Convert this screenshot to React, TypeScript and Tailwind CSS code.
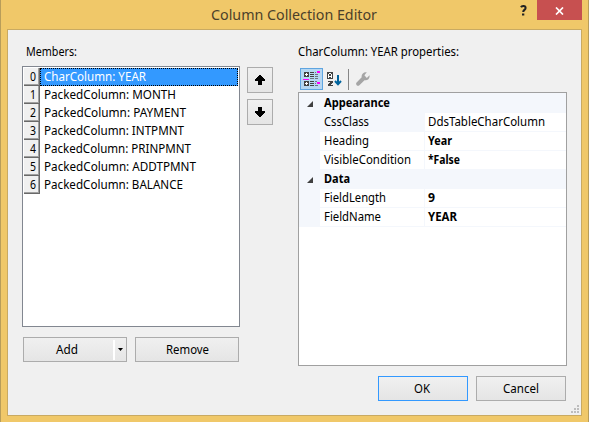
import React from "react";

const members = ["CharColumn: YEAR", "PackedColumn: MONTH", "PackedColumn: PAYMENT", "PackedColumn: INTPMNT", "PackedColumn: PRINPMNT", "PackedColumn: ADDTPMNT", "PackedColumn: BALANCE"];
const memberWidths = [102, 132, 142, 140, 147, 152, 139];

type Prop = { name: string; value: string; nameWidth: number; valueWidth: number; plain?: boolean };
const groups: { title: string; width: number; items: Prop[] }[] = [
  {
    title: "Appearance",
    width: 66,
    items: [
      { name: "CssClass", value: "DdsTableCharColumn", nameWidth: 45, valueWidth: 117, plain: true },
      { name: "Heading", value: "Year", nameWidth: 45, valueWidth: 24 },
      { name: "VisibleCondition", value: "*False", nameWidth: 87, valueWidth: 32 },
    ],
  },
  {
    title: "Data",
    width: 26,
    items: [
      { name: "FieldLength", value: "9", nameWidth: 62, valueWidth: 7 },
      { name: "FieldName", value: "YEAR", nameWidth: 57, valueWidth: 29 },
    ],
  },
];

/** Text fitted to a fixed advance width. */
function Label({ text, width, size = 12, bold = false, fill = "#000" }: { text: string; width: number; size?: number; bold?: boolean; fill?: string }) {
  return (
    <svg width={width} height={size + 6} className="block shrink-0 overflow-visible">
      <text x="0" y={size + 1} fontSize={size} fontWeight={bold ? 700 : 400} fill={fill} textLength={width} lengthAdjust="spacingAndGlyphs">
        {text}
      </text>
    </svg>
  );
}

const face = "border border-[#acacac] bg-linear-to-b from-[#f0f0f0] to-[#e5e5e5]";

function Arrow({ down = false }: { down?: boolean }) {
  return (
    <button className={`flex h-[26px] w-[26px] items-center justify-center ${face}`}>
      <svg width="10" height="10" viewBox="0 0 10 10" className={down ? "rotate-180" : ""} shapeRendering="crispEdges">
        <path d="M4 0h2v1h1v1h1v1h1v1h1v2H7v4H3V6H0V4h1V3h1V2h1V1h1z" />
      </svg>
    </button>
  );
}

function CategoryIcon() {
  return (
    <svg width="17" height="16" viewBox="0 0 17 16" shapeRendering="crispEdges">
      <path fill="#424242" d="M1 1h5v5H1zM1 10h5v5H1zM7 1h4v1H7zM7 3h4v1H7zM7 5h4v1H7zM7 10h4v1H7zM7 12h4v1H7zM7 14h4v1H7z" />
      <path fill="#6b7480" d="M7 7h4v1H7zM12 1h1v1h-1zM12 3h3v1h-3zM12 5h3v1h-3zM12 7h3v1h-3zM12 10h2v1h-2zM12 12h1v1h-1zM12 14h3v1h-3z" />
      <path fill="#fff" d="M3 2h1v1h1v1H4v1H3V4H2V3h1zM3 11h1v1h1v1H4v1H3v-1H2v-1h1z" />
      <path fill="#f0f" d="M0 8h6v1H0zM14 0h3v2h-3zM14 11h3v2h-3z" />
    </svg>
  );
}

function SortIcon() {
  return (
    <svg width="16" height="16" viewBox="0 0 16 16">
      <g shapeRendering="crispEdges">
        <path fill="#424242" d="M1 1h6v7H1z" />
        <path fill="#fff" d="M3 2h2v1H3zM2 3h1v4H2zM5 3h1v4H5zM3 5h2v1H3z" />
        <path fill="#424242" d="M2 10h5v2H6v1H5v1h2v1H2v-2h1v-1h1v-1H2z" />
      </g>
      <path fill="none" stroke="#00639c" strokeWidth="2" d="M12 4v9M9 10l3 3.2L15 10" />
    </svg>
  );
}

function Wrench() {
  return (
    <svg width="14" height="14" viewBox="0 0 14 14">
      <path fill="#a5a5a5" d="M10.8 0.3C8 -.4 5 2 5.7 5.2L.6 10.4c-1.6 1.8 1 4.5 2.8 2.8l5.1-5c3 .8 5.7-1.9 5-4.9L10.8 5.9 8.4 3.2z" />
    </svg>
  );
}

export default function App() {
  return (
    <div className="flex h-[422px] w-[589px] flex-col overflow-hidden border-x border-[#b89d5a] bg-[#f0c869] font-['Noto_Sans','Open_Sans',sans-serif] text-[12px] text-black">
      <header className="flex h-[29px] shrink-0">
        <div className="w-[210px]" />
        <div className="pt-[4px]"><Label text="Column Collection Editor" width={166} size={15} fill="#4b402a" /></div>
        <div className="ml-[143px] w-[17px] pt-[5px]">
          <svg width="7" height="11" viewBox="0 0 7 11"><path d="M1 2.3C1.8.6 5.6.3 5.6 3 5.6 5 3.2 4.8 3.2 7" fill="none" stroke="#222" strokeWidth="2" /><path fill="#222" d="M2 8.5h2.3v2H2z" /></svg>
        </div>
        <button className="flex h-[20px] w-[45px] items-center justify-center bg-[#c75050]">
          <svg width="9" height="8" viewBox="0 0 9 8" className="mt-px"><path d="M1 .5l7 7M8 .5l-7 7" stroke="#fff" strokeWidth="1.7" /></svg>
        </button>
      </header>
      <main className="ml-[6px] flex h-[387px] w-[575px] shrink-0 flex-col border border-[#c9aa62] bg-[#f0f0f0]">
        <div className="flex h-[336px] shrink-0">
          <section className="ml-[14px] w-[218px]">
            <div className="h-[36px] pt-[13px] pl-[4px]"><Label text="Members:" width={51} /></div>
            <div className="h-[261px] border border-[#828790] bg-white p-px">
              {members.map((m, i) => (
                <div key={m} className="flex h-[18px]">
                  <div className="flex w-[16px] border-r border-b border-[#696969] bg-[#f0f0f0] pl-[6px] shadow-[inset_-1px_-1px_#a0a0a0]">
                    <Label text={String(i)} width={6} />
                  </div>
                  <div className={`flex-1 pl-[4px] ${i === 0 ? "bg-[#3399ff] outline-1 -outline-offset-1 outline-dotted outline-black" : ""}`}>
                    <Label text={m} width={memberWidths[i]} fill={i === 0 ? "#fff" : "#000"} />
                  </div>
                </div>
              ))}
            </div>
            <div className="mt-[10px] flex gap-[8px] pl-px">
              <button className={`flex h-[25px] w-[104px] items-center ${face}`}>
                <span className="w-[89px] pt-px pl-[32px]"><Label text="Add" width={22} /></span>
                <span className="h-[20px] w-[2px] bg-white" />
                <svg width="5" height="3" className="ml-[3px]"><path d="M0 0h5L2.5 3z" /></svg>
              </button>
              <button className={`flex h-[25px] w-[104px] items-center justify-center pt-px ${face}`}><Label text="Remove" width={43} /></button>
            </div>
          </section>
          <div className="ml-[7px] flex w-[26px] flex-col gap-[6px] pt-[37px]"><Arrow /><Arrow down /></div>
          <section className="ml-[25px] w-[269px]">
            <div className="h-[38px] pt-[13px]"><Label text="CharColumn: YEAR properties:" width={161} /></div>
            <div className="flex h-[24px] items-start pl-[2px]">
              <button className="flex h-[22px] w-[23px] items-center justify-center border border-[#5fa5e0] bg-[#b6d7f2]"><CategoryIcon /></button>
              <button className="mt-[3px] ml-[3px]"><SortIcon /></button>
              <span className="mt-px ml-[6px] h-[21px] w-px bg-[#868686]" />
              <button className="mt-[4px] ml-[7px]"><Wrench /></button>
            </div>
            <div className="h-[274px] border border-[#a0a0a0] bg-white">
              <div className="h-px bg-[#f4f7fc]" />
              {groups.map((g) => (
                <div key={g.title}>
                  <div className="flex h-[19px] bg-[#f4f7fc]">
                    <div className="w-[25px] pt-[7px] pl-[8px]"><svg width="6" height="6" className="block"><path d="M6 0v6H0z" fill="#404040" /></svg></div>
                    <Label text={g.title} width={g.width} bold />
                  </div>
                  {g.items.map((p) => (
                    <div key={p.name} className="flex h-[19px]">
                      <div className="w-[21px] bg-[#f4f7fc]" />
                      <div className={`w-[105px] border-r border-b border-[#f4f7fc] pl-[4px] ${p.plain ? "bg-[#f4f7fc]" : ""}`}><Label text={p.name} width={p.nameWidth} /></div>
                      <div className="flex-1 border-b border-[#f4f7fc] pl-[3px]"><Label text={p.value} width={p.valueWidth} bold={!p.plain} /></div>
                    </div>
                  ))}
                </div>
              ))}
            </div>
          </section>
        </div>
        <footer className="mt-[10px] flex gap-[8px] pl-[370px]">
          <button className="flex h-[25px] w-[90px] items-center justify-center border border-[#3399ff] bg-linear-to-b from-[#f0f0f0] to-[#e5e5e5] pt-px pr-[2px]"><Label text="OK" width={16} /></button>
          <button className={`flex h-[25px] w-[90px] items-center justify-center pt-px ${face}`}><Label text="Cancel" width={36} /></button>
        </footer>
        <div className="mt-[4px] flex justify-end pr-[2px]">
          <svg width="8" height="8" fill="#bdbdbd" shapeRendering="crispEdges"><path d="M6 0h2v2H6zM3 3h2v2H3zM6 3h2v2H6zM0 6h2v2H0zM3 6h2v2H3zM6 6h2v2H6z" /></svg>
        </div>
      </main>
    </div>
  );
}
